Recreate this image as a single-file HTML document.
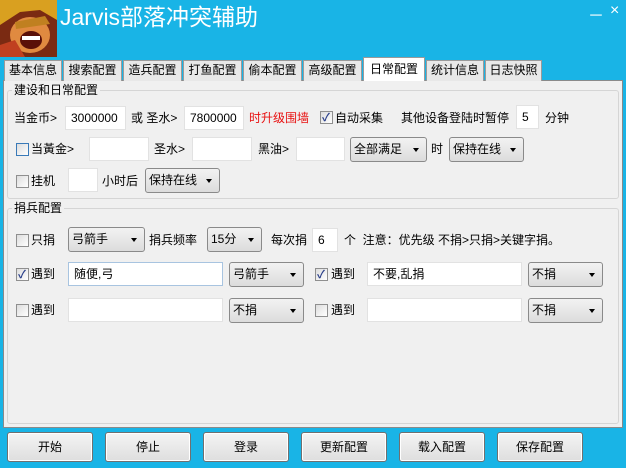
<!DOCTYPE html><html><head><meta charset="utf-8"><style>
*{margin:0;padding:0;box-sizing:border-box}
body{width:626px;height:468px;background:#19b4e6;font-family:"Liberation Sans","Noto Sans CJK SC",sans-serif;font-size:12px;color:#000;position:relative;overflow:hidden}
.a{position:absolute;white-space:nowrap}
.t{line-height:14px}
.tab{position:absolute;top:60px;height:21px;background:#e8e8e8;border:1px solid #9a9a9a;border-bottom:none;text-align:center;line-height:19px;font-size:12px}
.in{position:absolute;background:#fff;border:1px solid #e2e2e2;height:24px;line-height:22px;padding-left:5px}
.sel{position:absolute;height:25px;border:1px solid #8a8a8a;border-radius:3px;background:linear-gradient(#f2f2f2,#dcdcdc);line-height:23px;padding-left:3px}
.sel:after{content:"";position:absolute;right:7px;top:10px;border-left:3.5px solid transparent;border-right:3.5px solid transparent;border-top:4px solid #000}
.cb{position:absolute;width:13px;height:13px;border:1px solid #8f8f8f;background:linear-gradient(135deg,#ddd,#fff)}
.cb.on:after{content:"✓";position:absolute;left:1px;top:-3px;font-size:11px;color:#2a3f8a;font-weight:bold}
.btn{position:absolute;top:432px;width:86px;height:30px;border:1px solid #707070;border-radius:3px;background:linear-gradient(#f4f4f4,#dedede);text-align:center;line-height:28px;box-shadow:0 0 0 1px #fff inset}
.grp{position:absolute;border:1px solid #d5d5d5;border-radius:3px}
</style></head><body>
<svg class="a" style="left:0;top:0" width="57" height="57" viewBox="0 0 57 57"><rect width="57" height="57" fill="#7a2a12"/><path d="M0 0h57v20L40 10 20 12 0 25z" fill="#d9a020"/><ellipse cx="30" cy="35" rx="20" ry="18" fill="#e08a40"/><ellipse cx="31" cy="40" rx="11" ry="9" fill="#5a1008"/><path d="M22 36h18v4H22z" fill="#fff"/><path d="M15 22l30-6 5 8-34 5z" fill="#c08020"/><path d="M0 45l15-5 10 17H0z" fill="#c04020"/></svg>
<div class="a" style="left:60px;top:3px;font-size:23px;color:#fff;line-height:28px">Jarvis部落冲突辅助</div>
<div class="a" style="left:588px;top:2px;font-size:16px;color:#fff">－</div>
<div class="a" style="left:610px;top:2px;font-size:16px;color:#fff">×</div>
<div class="a" style="left:3px;top:80px;width:620px;height:348px;background:#f0f0f0;border:1px solid #8a8a8a"></div>
<div class="tab" style="left:4px;width:58px">基本信息</div>
<div class="tab" style="left:63px;width:59px">搜索配置</div>
<div class="tab" style="left:123px;width:59px">造兵配置</div>
<div class="tab" style="left:183px;width:59px">打鱼配置</div>
<div class="tab" style="left:243px;width:59px">偷本配置</div>
<div class="tab" style="left:303px;width:59px">高级配置</div>
<div class="tab" style="left:363px;top:57px;height:24px;width:62px;background:#fff;line-height:22px">日常配置</div>
<div class="tab" style="left:426px;width:58px">统计信息</div>
<div class="tab" style="left:485px;width:57px">日志快照</div>
<div class="grp" style="left:7px;top:90px;width:612px;height:109px"></div>
<div class="grp" style="left:7px;top:208px;width:612px;height:216px"></div>
<div class="a t" style="left:12px;top:83px;background:#f0f0f0;padding:0 2px">建设和日常配置</div>
<div class="a t" style="left:12px;top:201px;background:#f0f0f0;padding:0 2px">捐兵配置</div>

<div class="a t" style="left:14px;top:111px">当金币&gt;</div>
<div class="in" style="left:65px;top:106px;width:61px">3000000</div>
<div class="a t" style="left:131px;top:111px">或 圣水&gt;</div>
<div class="in" style="left:184px;top:106px;width:60px">7800000</div>
<div class="a t" style="left:249px;top:111px;color:#e81010">时升级围墙</div>
<div class="cb on" style="left:320px;top:111px"></div>
<div class="a t" style="left:335px;top:111px">自动采集</div>
<div class="a t" style="left:401px;top:111px">其他设备登陆时暂停</div>
<div class="in" style="left:516px;top:105px;width:23px">5</div>
<div class="a t" style="left:545px;top:111px">分钟</div>

<div class="cb" style="left:16px;top:143px;border-color:#3a7ab8"></div>
<div class="a t" style="left:31px;top:142px">当黃金&gt;</div>
<div class="in" style="left:89px;top:137px;width:60px"></div>
<div class="a t" style="left:154px;top:142px">圣水&gt;</div>
<div class="in" style="left:192px;top:137px;width:60px"></div>
<div class="a t" style="left:258px;top:142px">黑油&gt;</div>
<div class="in" style="left:296px;top:137px;width:49px"></div>
<div class="sel" style="left:350px;top:137px;width:77px">全部满足</div>
<div class="a t" style="left:431px;top:142px">时</div>
<div class="sel" style="left:449px;top:137px;width:75px">保持在线</div>

<div class="cb" style="left:16px;top:175px"></div>
<div class="a t" style="left:31px;top:174px">挂机</div>
<div class="in" style="left:68px;top:168px;width:30px"></div>
<div class="a t" style="left:102px;top:174px">小时后</div>
<div class="sel" style="left:145px;top:168px;width:75px">保持在线</div>

<div class="cb" style="left:16px;top:234px"></div>
<div class="a t" style="left:31px;top:233px">只捐</div>
<div class="sel" style="left:68px;top:227px;width:77px">弓箭手</div>
<div class="a t" style="left:149px;top:233px">捐兵频率</div>
<div class="sel" style="left:207px;top:227px;width:55px">15分</div>
<div class="a t" style="left:271px;top:233px">每次捐</div>
<div class="in" style="left:312px;top:228px;width:26px">6</div>
<div class="a t" style="left:344px;top:233px">个&nbsp; 注意：优先级 不捐&gt;只捐&gt;关键字捐。</div>

<div class="cb on" style="left:16px;top:268px"></div>
<div class="a t" style="left:31px;top:267px">遇到</div>
<div class="in" style="left:68px;top:262px;width:155px;border-color:#a8c4e0">随便,弓</div>
<div class="sel" style="left:229px;top:262px;width:75px">弓箭手</div>
<div class="cb on" style="left:315px;top:268px"></div>
<div class="a t" style="left:331px;top:267px">遇到</div>
<div class="in" style="left:367px;top:262px;width:155px">不要,乱捐</div>
<div class="sel" style="left:528px;top:262px;width:75px">不捐</div>

<div class="cb" style="left:16px;top:304px"></div>
<div class="a t" style="left:31px;top:303px">遇到</div>
<div class="in" style="left:68px;top:298px;width:155px"></div>
<div class="sel" style="left:229px;top:298px;width:75px">不捐</div>
<div class="cb" style="left:315px;top:304px"></div>
<div class="a t" style="left:331px;top:303px">遇到</div>
<div class="in" style="left:367px;top:298px;width:155px"></div>
<div class="sel" style="left:528px;top:298px;width:75px">不捐</div>

<div class="btn" style="left:7px">开始</div>
<div class="btn" style="left:105px">停止</div>
<div class="btn" style="left:203px">登录</div>
<div class="btn" style="left:301px">更新配置</div>
<div class="btn" style="left:399px">载入配置</div>
<div class="btn" style="left:497px">保存配置</div>
</body></html>
